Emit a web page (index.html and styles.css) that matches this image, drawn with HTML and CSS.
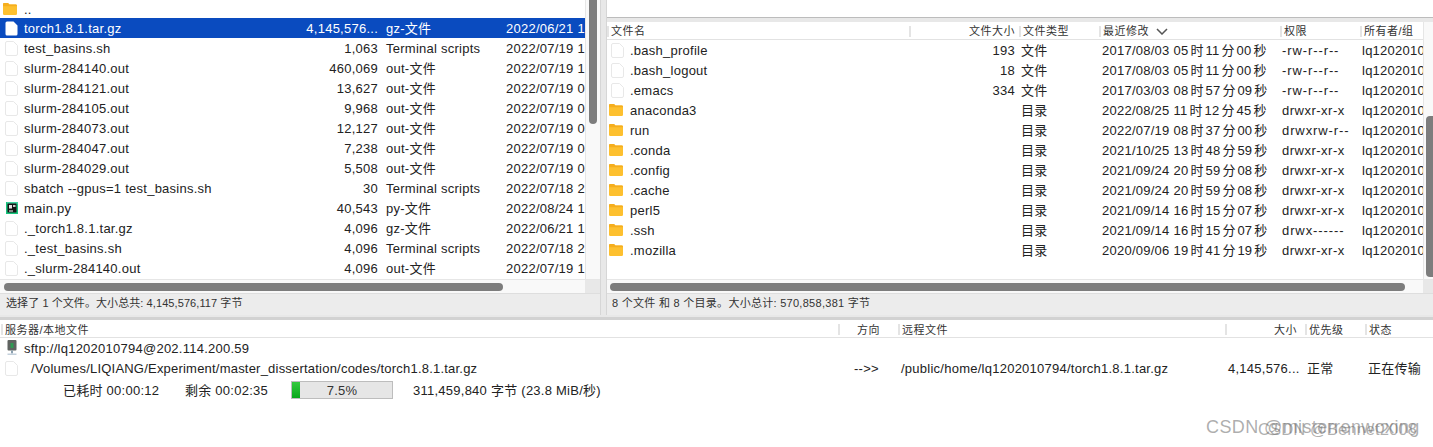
FILE: index.html
```html
<!DOCTYPE html>
<html lang="zh">
<head>
<meta charset="utf-8">
<title>FileZilla</title>
<link rel="stylesheet" href="styles.css">
</head>
<body>
<svg class="defs" width="0" height="0" aria-hidden="true">
  <symbol id="doc" viewBox="0 0 13 15"><path d="M2 .5h6.5l4 4v8.5a1.5 1.5 0 0 1-1.5 1.5h-9a1.5 1.5 0 0 1-1.500-1.500v-11a1.500 1.500 0 0 1 1.500-1.500z" fill="#fff" stroke="#e8e8e8"/></symbol>
  <symbol id="docw" viewBox="0 0 13 15"><path d="M2 .5h6.5l4 4v8.500a1.500 1.500 0 0 1-1.500 1.500h-9a1.500 1.500 0 0 1-1.500-1.500v-11a1.500 1.500 0 0 1 1.500-1.500z" fill="#fff"/></symbol>
  <symbol id="folder" viewBox="0 0 14 12"><path d="M1.300 0h3.700l1.400 1.500h6.300a1.300 1.300 0 0 1 1.300 1.300v7.900a1.300 1.300 0 0 1-1.300 1.300h-11.400a1.300 1.300 0 0 1-1.300-1.300v-9.400a1.300 1.300 0 0 1 1.300-1.300z" fill="#fdc02f"/><path d="M0 3.300h14v-.5a1.300 1.300 0 0 0-1.300-1.300h-6.300l-1.400-1.500h-3.700a1.300 1.300 0 0 0-1.300 1.300z" fill="#f5ae1e"/></symbol>
</svg>
<div class="panes">
  <section class="pane pane-left">
    <div class="pane-main">
      <div class="list">
        <div class="row row-up"><svg class="ic-folder"><use href="#folder"/></svg><span class="c-name">..</span></div>
        <div class="row sel"><svg class="ic-doc"><use href="#docw"/></svg><span class="c-name">torch1.8.1.tar.gz</span><span class="c-size">4,145,576...</span><span class="c-type">gz-文件</span><span class="c-date">2022/06/21 1</span></div>
        <div class="row"><svg class="ic-doc"><use href="#doc"/></svg><span class="c-name">test_basins.sh</span><span class="c-size">1,063</span><span class="c-type">Terminal scripts</span><span class="c-date">2022/07/19 1</span></div>
        <div class="row"><svg class="ic-doc"><use href="#doc"/></svg><span class="c-name">slurm-284140.out</span><span class="c-size">460,069</span><span class="c-type">out-文件</span><span class="c-date">2022/07/19 1</span></div>
        <div class="row"><svg class="ic-doc"><use href="#doc"/></svg><span class="c-name">slurm-284121.out</span><span class="c-size">13,627</span><span class="c-type">out-文件</span><span class="c-date">2022/07/19 0</span></div>
        <div class="row"><svg class="ic-doc"><use href="#doc"/></svg><span class="c-name">slurm-284105.out</span><span class="c-size">9,968</span><span class="c-type">out-文件</span><span class="c-date">2022/07/19 0</span></div>
        <div class="row"><svg class="ic-doc"><use href="#doc"/></svg><span class="c-name">slurm-284073.out</span><span class="c-size">12,127</span><span class="c-type">out-文件</span><span class="c-date">2022/07/19 0</span></div>
        <div class="row"><svg class="ic-doc"><use href="#doc"/></svg><span class="c-name">slurm-284047.out</span><span class="c-size">7,238</span><span class="c-type">out-文件</span><span class="c-date">2022/07/19 0</span></div>
        <div class="row"><svg class="ic-doc"><use href="#doc"/></svg><span class="c-name">slurm-284029.out</span><span class="c-size">5,508</span><span class="c-type">out-文件</span><span class="c-date">2022/07/19 0</span></div>
        <div class="row"><svg class="ic-doc"><use href="#doc"/></svg><span class="c-name">sbatch --gpus=1 test_basins.sh</span><span class="c-size">30</span><span class="c-type">Terminal scripts</span><span class="c-date">2022/07/18 2</span></div>
        <div class="row"><svg class="ic-py" viewBox="0 0 12 12"><rect width="12" height="12" fill="#17c47c"/><rect x="1" y="0" width="11" height="2" fill="#3fd0a0"/><rect x="1.500" y="1.500" width="9" height="9" fill="#141414"/><rect x="3" y="3" width="3" height="3.500" fill="#e4e4e4"/><rect x="7" y="3" width="2.500" height="2" fill="#c8c8c8"/><rect x="3" y="8.500" width="4" height="1" fill="#fff"/></svg><span class="c-name">main.py</span><span class="c-size">40,543</span><span class="c-type">py-文件</span><span class="c-date">2022/08/24 1</span></div>
        <div class="row"><svg class="ic-doc"><use href="#doc"/></svg><span class="c-name">._torch1.8.1.tar.gz</span><span class="c-size">4,096</span><span class="c-type">gz-文件</span><span class="c-date">2022/06/21 1</span></div>
        <div class="row"><svg class="ic-doc"><use href="#doc"/></svg><span class="c-name">._test_basins.sh</span><span class="c-size">4,096</span><span class="c-type">Terminal scripts</span><span class="c-date">2022/07/18 2</span></div>
        <div class="row"><svg class="ic-doc"><use href="#doc"/></svg><span class="c-name">._slurm-284140.out</span><span class="c-size">4,096</span><span class="c-type">out-文件</span><span class="c-date">2022/07/19 1</span></div>
      </div>
      <div class="vtrack vtrack-left"><div class="vthumb"></div></div>
    </div>
    <div class="htrack"><div class="hwrap"><div class="hthumb"></div></div><div class="corner"></div></div>
    <div class="status">选择了 1 个文件。大小总共: 4,145,576,117 字节</div>
  </section>
  <section class="pane pane-right">
    <div class="tree"></div>
    <div class="pane-main">
      <div class="list">
        <div class="head">
          <span class="h-name">文件名</span><span class="h-size">文件大小</span><span class="h-type">文件类型</span><span class="h-date">最近修改<svg class="chev" viewBox="0 0 12 7"><path d="M1 1l5 5 5-5" fill="none" stroke="#555" stroke-width="1.500"/></svg></span><span class="h-perm">权限</span><span class="h-own">所有者/组</span>
        </div>
        <div class="row"><svg class="ic-doc"><use href="#doc"/></svg><span class="r-name">.bash_profile</span><span class="r-size">193</span><span class="r-type">文件</span><span class="r-date">2017/08/03 05<i>时</i>11<i>分</i>00<i>秒</i></span><span class="r-perm dash">-rw-r--r--</span><span class="r-own">lq1202010</span></div>
        <div class="row"><svg class="ic-doc"><use href="#doc"/></svg><span class="r-name">.bash_logout</span><span class="r-size">18</span><span class="r-type">文件</span><span class="r-date">2017/08/03 05<i>时</i>11<i>分</i>00<i>秒</i></span><span class="r-perm dash">-rw-r--r--</span><span class="r-own">lq1202010</span></div>
        <div class="row"><svg class="ic-doc"><use href="#doc"/></svg><span class="r-name">.emacs</span><span class="r-size">334</span><span class="r-type">文件</span><span class="r-date">2017/03/03 08<i>时</i>57<i>分</i>09<i>秒</i></span><span class="r-perm dash">-rw-r--r--</span><span class="r-own">lq1202010</span></div>
        <div class="row"><svg class="ic-folder"><use href="#folder"/></svg><span class="r-name">anaconda3</span><span class="r-size"></span><span class="r-type">目录</span><span class="r-date">2022/08/25 11<i>时</i>12<i>分</i>45<i>秒</i></span><span class="r-perm">drwxr-xr-x</span><span class="r-own">lq1202010</span></div>
        <div class="row"><svg class="ic-folder"><use href="#folder"/></svg><span class="r-name">run</span><span class="r-size"></span><span class="r-type">目录</span><span class="r-date">2022/07/19 08<i>时</i>37<i>分</i>00<i>秒</i></span><span class="r-perm dash">drwxrw-r--</span><span class="r-own">lq1202010</span></div>
        <div class="row"><svg class="ic-folder"><use href="#folder"/></svg><span class="r-name">.conda</span><span class="r-size"></span><span class="r-type">目录</span><span class="r-date">2021/10/25 13<i>时</i>48<i>分</i>59<i>秒</i></span><span class="r-perm">drwxr-xr-x</span><span class="r-own">lq1202010</span></div>
        <div class="row"><svg class="ic-folder"><use href="#folder"/></svg><span class="r-name">.config</span><span class="r-size"></span><span class="r-type">目录</span><span class="r-date">2021/09/24 20<i>时</i>59<i>分</i>08<i>秒</i></span><span class="r-perm">drwxr-xr-x</span><span class="r-own">lq1202010</span></div>
        <div class="row"><svg class="ic-folder"><use href="#folder"/></svg><span class="r-name">.cache</span><span class="r-size"></span><span class="r-type">目录</span><span class="r-date">2021/09/24 20<i>时</i>59<i>分</i>08<i>秒</i></span><span class="r-perm">drwxr-xr-x</span><span class="r-own">lq1202010</span></div>
        <div class="row"><svg class="ic-folder"><use href="#folder"/></svg><span class="r-name">perl5</span><span class="r-size"></span><span class="r-type">目录</span><span class="r-date">2021/09/14 16<i>时</i>15<i>分</i>07<i>秒</i></span><span class="r-perm">drwxr-xr-x</span><span class="r-own">lq1202010</span></div>
        <div class="row"><svg class="ic-folder"><use href="#folder"/></svg><span class="r-name">.ssh</span><span class="r-size"></span><span class="r-type">目录</span><span class="r-date">2021/09/14 16<i>时</i>15<i>分</i>07<i>秒</i></span><span class="r-perm dash">drwx------</span><span class="r-own">lq1202010</span></div>
        <div class="row"><svg class="ic-folder"><use href="#folder"/></svg><span class="r-name">.mozilla</span><span class="r-size"></span><span class="r-type">目录</span><span class="r-date">2020/09/06 19<i>时</i>41<i>分</i>19<i>秒</i></span><span class="r-perm">drwxr-xr-x</span><span class="r-own">lq1202010</span></div>
      </div>
      <div class="vtrack vtrack-right"><div class="vthumb vthumb-right"></div></div>
    </div>
    <div class="htrack"><div class="hwrap hwrap-right"><div class="hthumb hthumb-right"></div></div><div class="corner corner-right"></div></div>
    <div class="status status-right">8 个文件 和 8 个目录。大小总计: 570,858,381 字节</div>
  </section>
</div>
<section class="queue">
  <div class="qhead">
    <span class="q-server">服务器/本地文件</span><span class="q-dir">方向</span><span class="q-remote">远程文件</span><span class="q-size">大小</span><span class="q-prio">优先级</span><span class="q-state">状态</span>
  </div>
  <div class="qrow"><svg class="ic-server" viewBox="0 0 12 16"><rect x="1.500" width="9" height="10.500" rx="1" fill="#5f6360"/><rect x="4.500" y="3" width="3" height="5" fill="#2f9a52"/><rect x="5" y="10.500" width="2" height="3" fill="#8aa0b0"/><rect x="1.500" y="13.500" width="9" height="1.500" fill="#c3d0db"/></svg><span>sftp://lq1202010794@202.114.200.59</span></div>
  <div class="qrow qfile"><svg class="ic-doc"><use href="#doc"/></svg><span class="qf-local">/Volumes/LIQIANG/Experiment/master_dissertation/codes/torch1.8.1.tar.gz</span><span class="qf-dir">--&gt;&gt;</span><span class="qf-remote">/public/home/lq1202010794/torch1.8.1.tar.gz</span><span class="qf-size">4,145,576...</span><span class="qf-prio">正常</span><span class="qf-state">正在传输</span></div>
  <div class="qrow qprog"><span class="p-el">已耗时 00:00:12</span><span class="p-left">剩余 00:02:35</span><div class="bar"><div class="fill"></div><span class="pct">7.5%</span></div><span class="p-bytes">311,459,840 字节 (23.8 MiB/秒)</span></div>
</section>
<div class="wm"><span class="wm1">CSDN @misterrenwoxing</span><span class="wm2">CSDN @Bennet2008</span></div>
</body>
</html>
```
FILE: styles.css
```css
* { box-sizing: border-box; }
html, body { margin: 0; height: 100%; }
body {
  width: 1433px; height: 447px; overflow: hidden; background: #fff; position: relative;
  font: 13px/20px "Liberation Sans", "Noto Sans CJK SC", sans-serif; letter-spacing: .25px; color: #222;
}
i { font-style: normal; margin: 0 2px; letter-spacing: 0; }
.defs { position: absolute; }
.panes { display: flex; height: 320px; padding-bottom: 2px; background: #e8e8e8; border-bottom: 3px solid #d2d2d2; }
.pane { display: flex; flex-direction: column; overflow: hidden; }
.pane-left { width: 601px; border-right: 1px solid #d6d6d6; }
.pane-right { flex: 1; margin-left: 5px; border-left: 1px solid #d6d6d6; }
.tree { height: 18px; background: #fff; border-bottom: 1px solid #bcbcbc; margin-bottom: 4px; flex: none; }
.pane-main { flex: 1; display: flex; min-height: 0; background: #fff; }
.list { flex: 1; min-width: 0; overflow: hidden; }
.row { display: flex; align-items: center; height: 20px; white-space: nowrap; }
.row > span, .qrow > span { line-height: 18px; padding-top: 2px; }
.row-up { height: 18px; }
.sel { background: #0a4bbf; color: #fff; }
.ic-doc { width: 13px; height: 15px; flex: none; margin: 0 6px 0 5px; }
.ic-py { width: 12px; height: 12px; flex: none; margin: 0 6px 0 6px; }
.ic-folder { width: 14px; height: 12px; flex: none; margin: 0 7px 0 3px; }
.pane-right .ic-doc { margin-left: 4px; }
.pane-right .ic-folder { margin-left: 2px; }
.pane-left .list { border-right: 1px solid #e6e6e6; }
.c-name { width: 274px; overflow: hidden; }
.c-size { width: 84px; text-align: right; padding-right: 4px; overflow: hidden; }
.c-type { width: 124px; padding-left: 4px; overflow: hidden; }
.c-date { flex: 1; overflow: hidden; }
.vtrack { flex: none; background: #f9f9f9; }
.vtrack-left { width: 14px; padding: 0 3px; }
.vtrack-right { width: 10px; padding: 94px 0 0 2px; border-left: 1px solid #e6e6e6; }
.vthumb { width: 8px; height: 124px; background: #7d7d7d; border-radius: 0 0 4px 4px; }
.vthumb-right { width: 7px; height: 161px; border-radius: 4px 0 0 4px; }
.htrack { height: 14px; flex: none; display: flex; background: #f9f9f9; border-top: 1px solid #e6e6e6; }
.hwrap { flex: 1; padding: 3px 0 0 4px; }
.hwrap-right { padding-left: 3px; }
.corner { width: 15px; background: #e8e8e8; }
.corner-right { width: 10px; }
.hthumb { width: 499px; height: 8px; background: #7d7d7d; border-radius: 4px; }
.hthumb-right { width: 795px; }
.status { height: 22px; flex: none; padding-left: 6px; font-size: 11px; line-height: 18px; letter-spacing: .08px; color: #333; background: #ececec; border-top: 1px solid #dedede; }
.status-right { padding-left: 5px; letter-spacing: .28px; }
.head { display: flex; height: 18px; font-size: 11px; letter-spacing: .5px; color: #333; border-bottom: 1px solid #e2e2e2; white-space: nowrap; }
.head span { border-left: 2px solid #e4e4e4; padding-left: 2px; height: 11px; line-height: 11px; margin-top: 4px; }
.h-name { width: 302px; }
.h-size { width: 110px; text-align: right; padding-right: 4px; }
.h-type { width: 80px; }
.h-date { width: 181px; }
.h-perm { width: 80px; }
.h-own { flex: 1; }
.chev { width: 12px; height: 7px; margin-left: 7px; }
.r-name { width: 263px; overflow: hidden; }
.r-size { width: 122px; text-align: right; }
.r-type { width: 87px; padding-left: 6px; }
.r-date { width: 180px; letter-spacing: .25px; }
.r-perm { width: 80px; letter-spacing: .5px; }
.dash { letter-spacing: .9px; }
.r-own { flex: 1; overflow: hidden; }
.queue { display: flex; flex-direction: column; }
.qhead { display: flex; height: 18px; padding-left: 1px; border-bottom: 1px solid #e2e2e2; font-size: 11px; letter-spacing: .5px; color: #333; white-space: nowrap; }
.qhead span { height: 11px; line-height: 13px; margin-top: 4px; padding-left: 2px; border-left: 2px solid #e4e4e4; }
.q-server { width: 837px; }
.q-dir { width: 60px; text-align: right; padding-right: 18px; }
.q-remote { width: 327px; }
.q-size { width: 80px; text-align: right; padding-right: 8px; }
.q-prio { width: 60px; }
.q-state { flex: 1; }
.qrow { display: flex; align-items: center; height: 20px; white-space: nowrap; }
.ic-server { width: 12px; height: 16px; margin: 0 6px; flex: none; }
.qfile .ic-doc { margin-right: 13px; }
.qf-local { width: 823px; letter-spacing: .21px; }
.qf-dir { width: 47px; }
.qf-remote { width: 327px; }
.qf-size { width: 79px; }
.qf-prio { width: 61px; }
.qprog { padding-left: 63px; margin-top: 2px; }
.p-el { width: 122px; }
.p-left { width: 106px; }
.bar { width: 102px; height: 18px; position: relative; border: 1px solid #bdbdbd; background: #e6e6e6; text-align: center; line-height: 18px; margin-right: 20px; }
.fill { position: absolute; left: 0; top: 0; bottom: 0; width: 8px; background: linear-gradient(#35c93f, #07a81a); }
.pct { position: relative; color: #333; }
.wm { position: absolute; left: 1206px; top: 416px; font-size: 18px; line-height: 22px; letter-spacing: .4px; color: rgba(120,120,120,.6); white-space: nowrap; }
.wm1, .wm2 { position: absolute; top: 0; }
.wm2 { left: 52px; top: 3px; font-size: 16.700px; letter-spacing: 0; color: rgba(110,110,110,.55); }
```
